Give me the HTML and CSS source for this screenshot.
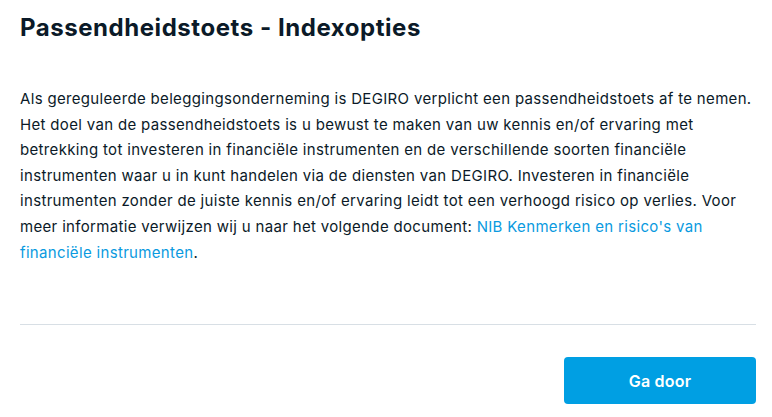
FILE: index.html
```html
<!DOCTYPE html>
<html lang="nl">
<head>
<meta charset="utf-8">
<title>Passendheidstoets - Indexopties</title>
<link rel="stylesheet" href="styles.css">
</head>
<body>
<div class="dialog">
  <h1 class="title">Passendheidstoets - Indexopties</h1>
  <p class="text">Als gereguleerde beleggingsonderneming is DEGIRO verplicht een passendheidstoets af te nemen. Het doel van de passendheidstoets is u bewust te maken van uw kennis en/of ervaring met betrekking tot investeren in financiële instrumenten en de verschillende soorten financiële instrumenten waar u in kunt handelen via de diensten van DEGIRO. Investeren in financiële instrumenten zonder de juiste kennis en/of ervaring leidt tot een verhoogd risico op verlies. Voor meer informatie verwijzen wij u naar het volgende document: <a class="link" href="#">NIB Kenmerken en risico's van financiële instrumenten</a>.</p>
  <hr class="divider">
  <div class="actions">
    <button class="btn" type="button">Ga door</button>
  </div>
</div>
</body>
</html>
```
FILE: styles.css
```css
html, body {
  margin: 0;
  padding: 0;
  background: #ffffff;
}
body {
  font-family: Inter, "Noto Sans", sans-serif;
  color: #0b1a28;
}
.dialog {
  padding: 12px 16px 0 20px;
}
.title {
  margin: 0;
  font-size: 24px;
  line-height: 32px;
  font-weight: 700;
  letter-spacing: 0.55px;
  color: #0b1a28;
}
.text {
  margin: 42px 0 0 0;
  font-size: 15px;
  line-height: 25.6px;
  letter-spacing: 0.33px;
  color: #0b1a28;
}
.link {
  color: #0a9ae0;
  text-decoration: none;
}
.divider {
  margin: 59px 0 0 0;
  border: 0;
  border-top: 1px solid #d8dfe5;
  height: 0;
}
.actions {
  display: flex;
  justify-content: flex-end;
  margin-top: 32px;
}
.btn {
  width: 192px;
  height: 47px;
  border: 0;
  border-radius: 4px;
  background: #009fe3;
  color: #ffffff;
  font-family: Inter, "Noto Sans", sans-serif;
  font-size: 16px;
  font-weight: 600;
  letter-spacing: 0.2px;
  cursor: pointer;
}
```
